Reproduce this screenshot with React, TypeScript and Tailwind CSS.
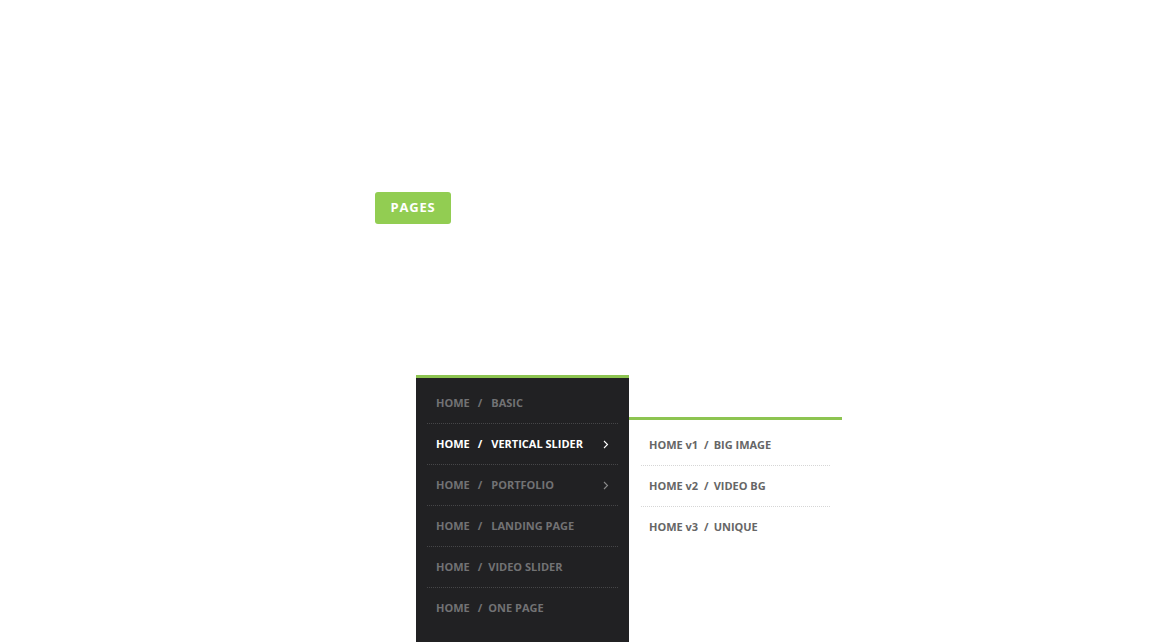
const mainItems = [
  { home: "HOME", label: "BASIC", active: false, arrow: false, tight: false },
  { home: "HOME", label: "VERTICAL SLIDER", active: true, arrow: true, tight: false },
  { home: "HOME", label: "PORTFOLIO", active: false, arrow: true, tight: false },
  { home: "HOME", label: "LANDING PAGE", active: false, arrow: false, tight: false },
  { home: "HOME", label: "VIDEO SLIDER", active: false, arrow: false, tight: true },
  { home: "HOME", label: "ONE PAGE", active: false, arrow: false, tight: true },
];

const subItems = [
  { home: "HOME v1", label: "BIG IMAGE" },
  { home: "HOME v2", label: "VIDEO BG" },
  { home: "HOME v3", label: "UNIQUE" },
];

function Chevron({ active }: { active: boolean }) {
  return (
    <svg width="6" height="9" viewBox="0 0 6 9" className="mr-[9px]">
      <polyline
        points="1,1 4.5,4.5 1,8"
        fill="none"
        stroke={active ? "#ffffff" : "#8a8a8a"}
        strokeWidth="1.1"
      />
    </svg>
  );
}

export default function App() {
  return (
    <div className="relative h-[642px] w-full overflow-hidden bg-white font-['Open_Sans',sans-serif]">
      {/* Trigger */}
      <div className="pl-[375px] pt-[192px]">
        <button className="flex h-[32px] w-[76px] items-center justify-center rounded-[3px] bg-[#92cd52] text-[13px] font-bold tracking-[0.8px] text-white">
          PAGES
        </button>
      </div>

      {/* Dropdown */}
      <div className="ml-[416px] mt-[151px] w-[213px] border-t-[3px] border-[#8dc451] bg-[#212123] pb-[20px] pt-[5px]">
        {mainItems.map((item, i) => (
          <div key={item.label} className="relative">
            <div
              className={`mx-[11px] flex h-[41px] items-center justify-between pl-[9px] ${
                i < mainItems.length - 1 ? "border-b border-dotted border-[#464648]" : ""
              }`}
            >
              <span
                className={`flex text-[11px] font-bold ${
                  item.active ? "text-white" : "text-[#727274]"
                }`}
              >
                <span>{item.home}</span>
                <span className={item.tight ? "ml-[8px] mr-[6px]" : "ml-[8px] mr-[9px]"}>/</span>
                <span>{item.label}</span>
              </span>
              {item.arrow && <Chevron active={item.active} />}
            </div>

            {item.active && (
              <div className="absolute left-[213px] top-[-7px] w-[213px] border-t-[3px] border-[#8dc451] bg-white pb-[10px] pt-[5px]">
                {subItems.map((sub, j) => (
                  <div
                    key={sub.label}
                    className={`mx-[12px] flex h-[41px] items-center pl-[8px] ${
                      j < subItems.length - 1 ? "border-b border-dotted border-[#d6d6d6]" : ""
                    }`}
                  >
                    <span className="flex text-[11px] font-bold text-[#666666]">
                      <span>{sub.home}</span>
                      <span className="ml-[6px] mr-[5px]">/</span>
                      <span>{sub.label}</span>
                    </span>
                  </div>
                ))}
              </div>
            )}
          </div>
        ))}
      </div>
    </div>
  );
}
